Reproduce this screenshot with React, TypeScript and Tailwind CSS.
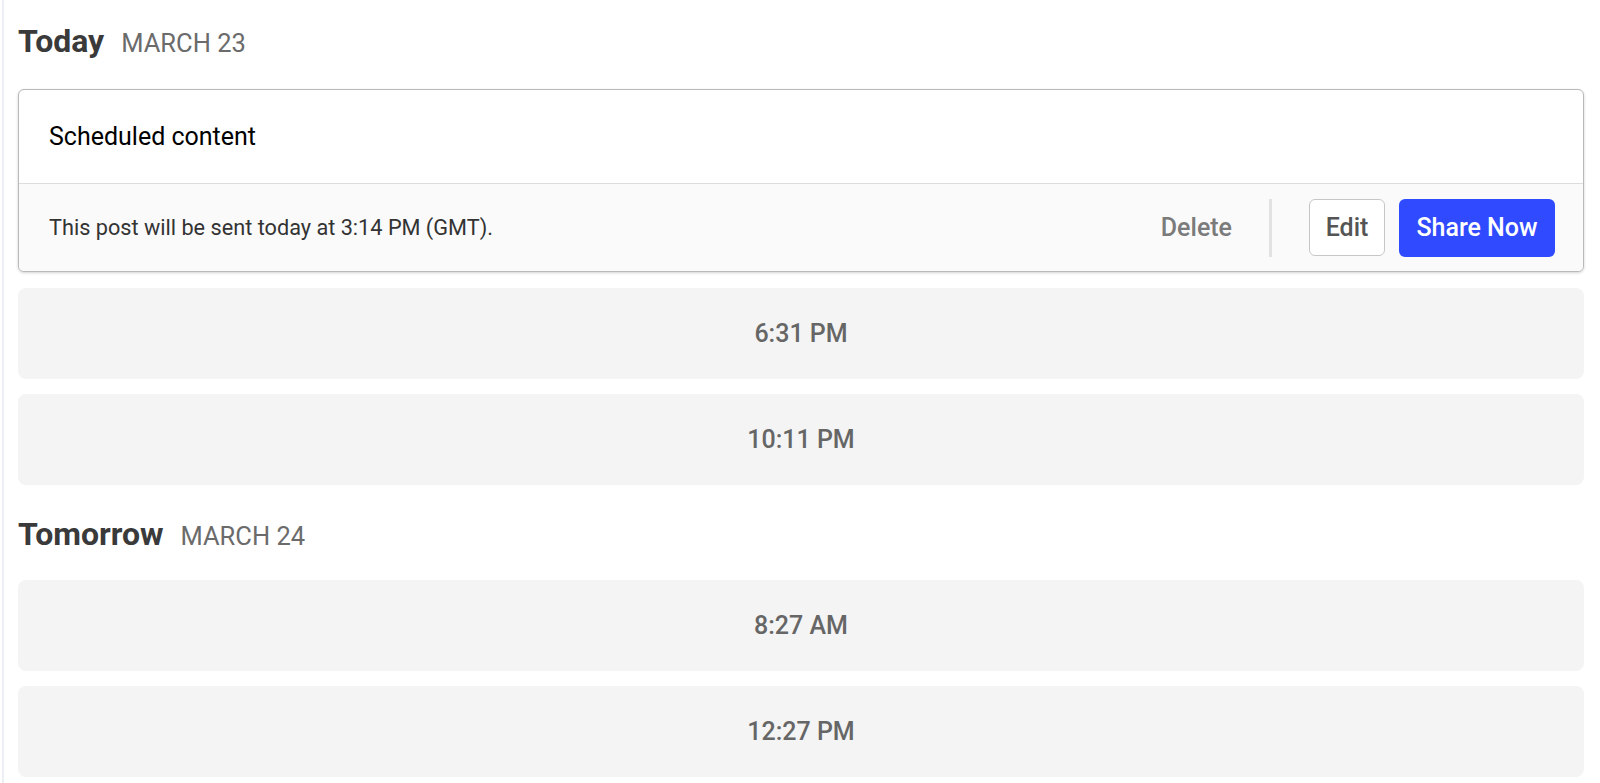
import React from 'react';

const days = [
  { label: 'Today', date: 'MARCH 23', slots: ['6:31 PM', '10:11 PM'], post: true },
  { label: 'Tomorrow', date: 'MARCH 24', slots: ['8:27 AM', '12:27 PM'], post: false },
];

function PostCard() {
  return (
    <div className="rounded-[6px] border border-[#b9b9b9] bg-white shadow-[0_1px_3px_rgba(0,0,0,0.18)] overflow-hidden">
      <div className="h-[93px] flex items-center pl-[30px] text-[25px] leading-[30px] text-black">
        Scheduled content
      </div>
      <div className="h-[88px] flex items-center border-t border-[#dcdcdc] bg-[#fafafa] pl-[30px] pr-[28px]">
        <p className="flex-1 text-[21.7px] leading-[26px] text-[#333]">
          This post will be sent today at 3:14 PM (GMT).
        </p>
        <button className="text-[25px] font-medium text-[#7b7b7b] mr-[37px]">Delete</button>
        <div className="w-[3px] h-[58px] bg-[#e2e2e2] mr-[37px]" />
        <button className="w-[76px] h-[57px] rounded-[6px] border border-[#c6c6c6] bg-white text-[25px] font-medium text-[#555]">
          Edit
        </button>
        <button className="ml-[14px] w-[156px] h-[58px] rounded-[6px] bg-[#304bff] text-[25px] font-medium text-white">
          Share Now
        </button>
      </div>
    </div>
  );
}

function Slot({ time }: { time: string }) {
  return (
    <div className="h-[91px] rounded-[8px] bg-[#f4f4f4] flex items-center justify-center text-[25px] font-medium text-[#666]">
      {time}
    </div>
  );
}

export default function App() {
  return (
    <div className="min-h-screen bg-white" style={{ fontFamily: 'Roboto, "Liberation Sans", sans-serif' }}>
      <div className="ml-[2px] min-h-screen border-l-2 border-[#eceff3] pl-[14px] pr-[16px]">
        {days.map((day, i) => (
          <div key={day.label}>
            <div className={`flex items-baseline gap-[17px] leading-[36px] ${i === 0 ? 'pt-[23px] mb-[28px]' : 'pt-[31px] mb-[26px]'}`}>
              <h2 className="text-[32px] font-bold text-[#3a3a3a]">{day.label}</h2>
              <span className="text-[25.5px] text-[#6b6b6b]">{day.date}</span>
            </div>
            <div className="flex flex-col gap-[15px]">
              {day.post && (
                <div className="mb-[1px]">
                  <PostCard />
                </div>
              )}
              {day.slots.map((t) => (
                <Slot key={t} time={t} />
              ))}
            </div>
          </div>
        ))}
      </div>
    </div>
  );
}
